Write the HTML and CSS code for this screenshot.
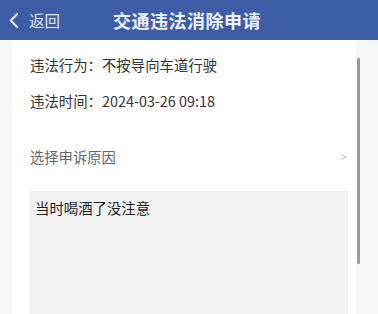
FILE: index.html
```html
<!DOCTYPE html>
<html lang="zh-CN">
<head>
  <meta charset="UTF-8">
  <meta name="viewport" content="width=device-width, initial-scale=1.0">
  <title>交通违法消除申请</title>
  <link rel="stylesheet" href="styles.css">
</head>
<body>
  <header class="nav-bar">
    <div class="nav-back">
      <svg class="back-icon" viewBox="0 0 12 16">
        <polyline points="10 1 3 8 10 15" fill="none" stroke="#e8eef8" stroke-width="2.2" stroke-linecap="round" stroke-linejoin="round"/>
      </svg>
      <span>返回</span>
    </div>
    <h1 class="nav-title">交通违法消除申请</h1>
  </header>

  <main class="page">
    <section class="card">
      <div class="info-row">违法行为：不按导向车道行驶</div>
      <div class="info-row">违法时间：2024-03-26 09:18</div>

      <div class="select-row">
        <span>选择申诉原因</span>
        <span class="select-arrow">&gt;</span>
      </div>

      <div class="reason-box">当时喝酒了没注意</div>
    </section>
    <div class="scrollbar"></div>
  </main>
</body>
</html>
```

FILE: styles.css
```css
html, body {
  overflow: hidden;
}

body {
  margin: 0;
  height: 314px;
  display: flex;
  flex-direction: column;
  background-color: #f4f6f7;
  font-family: "Noto Sans CJK SC", "Noto Sans", sans-serif;
}

/** Nav bar **/

.nav-bar {
  position: relative;
  flex: none;
  height: 40px;
  background-color: #3d5ea7;
  display: flex;
  align-items: center;
  justify-content: center;
}

.nav-back {
  position: absolute;
  left: 8px;
  top: 0;
  height: 40px;
  display: flex;
  align-items: center;
  gap: 10px;
  color: #dfe7f5;
  font-size: 15.5px;
}

.back-icon {
  width: 11px;
  height: 15px;
}

.nav-title {
  margin: 0 0 0 -4px;
  font-size: 18px;
  font-weight: bold;
  color: #eef3fb;
  letter-spacing: 0.5px;
}

/** Content **/

.page {
  flex: 1;
  min-height: 0;
  display: flex;
  padding-left: 11px;
}

.card {
  width: 346px;
  display: flex;
  flex-direction: column;
  background-color: #fff;
  padding: 15px 0 0 19px;
  box-sizing: border-box;
}

.info-row {
  font-size: 14.4px;
  color: #333;
  line-height: 20px;
  margin-bottom: 16px;
}

.select-row {
  display: flex;
  justify-content: space-between;
  align-items: center;
  margin-top: 20px;
  padding-right: 10px;
  font-size: 14.3px;
  color: #666;
  line-height: 20px;
}

.select-arrow {
  color: #c8c8c8;
  font-size: 13px;
}

.reason-box {
  flex: 1;
  margin-top: 24px;
  margin-right: 9px;
  background-color: #f2f2f2;
  padding: 7px 5px;
  font-size: 14.4px;
  color: #1e1e1e;
  line-height: 20px;
}

.scrollbar {
  flex: none;
  width: 3px;
  height: 206px;
  margin-top: 18px;
  background-color: #9a9a9a;
  border-radius: 1px;
}
```
